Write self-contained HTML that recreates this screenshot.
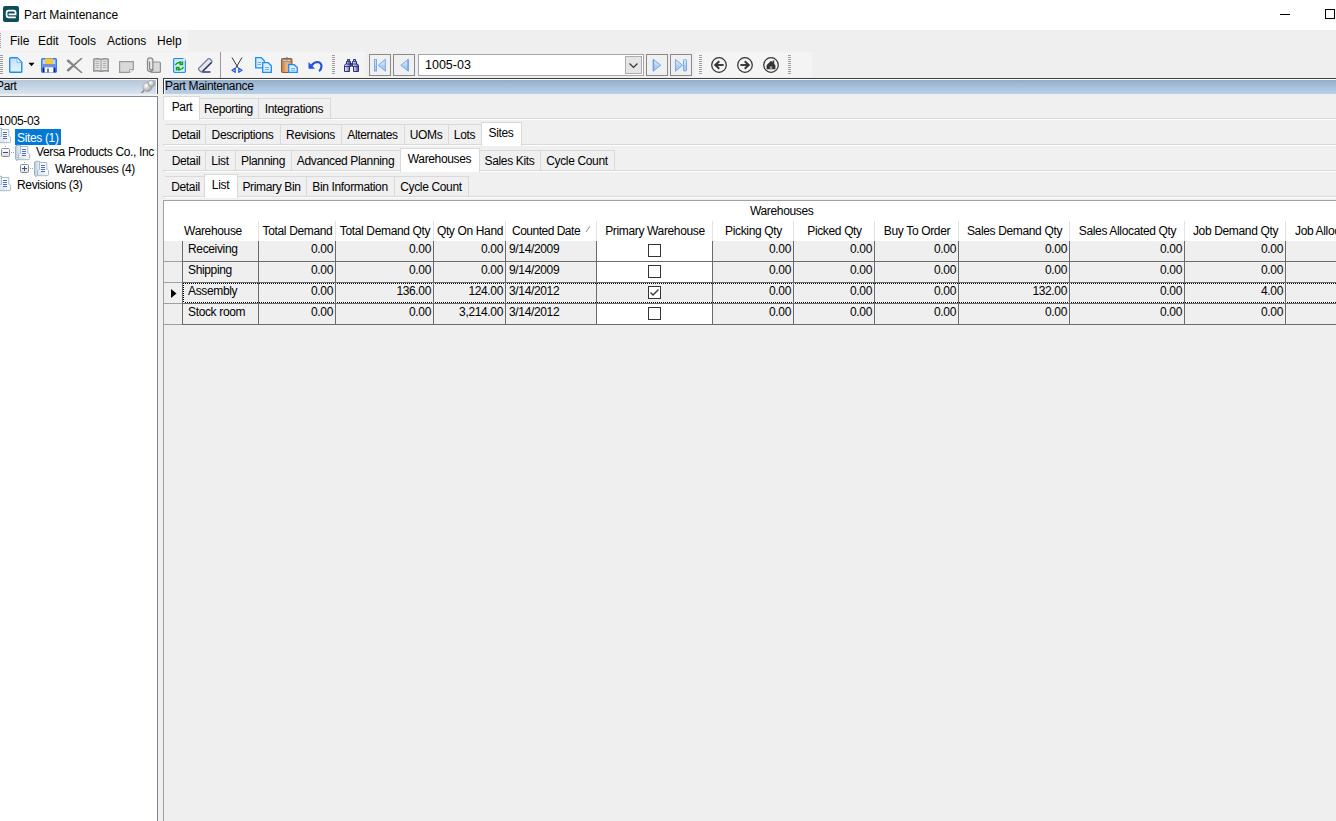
<!DOCTYPE html>
<html><head><meta charset="utf-8"><style>
*{margin:0;padding:0;box-sizing:border-box}
html,body{width:1336px;height:821px;overflow:hidden}
body{position:relative;background:#f0f0f0;font-family:"Liberation Sans",sans-serif;font-size:12px;letter-spacing:-0.35px;color:#000}
div,svg{position:absolute}
.t{white-space:pre;line-height:13px}
.m{font-size:12px;line-height:14px;letter-spacing:0}
.strip{background:#f4f4f4}
.grip{width:3px;background:repeating-linear-gradient(to bottom,#a0a0a0 0 1px,transparent 1px 2px)}
.tab{background:#f0f0f0;border:1px solid #d9d9d9;border-right:none;text-align:center}
.tabsel{background:#fff;border:1px solid #d9d9d9;border-bottom:none;text-align:center}
.nb{width:22px;height:22px;border:1px solid #8a8a8a;background:#f0f0f0}
</style></head><body>
<div style="left:0;top:0;width:1336px;height:30px;background:#fff"></div>
<svg style="left:3px;top:6px" width="16" height="16" viewBox="0 0 16 16"><rect x="0" y="0" width="16" height="16" rx="2" fill="#0d4e5c"/><path d="M12.8 11.3H5.6Q3.6 11.3 3.6 9.3V6.6Q3.6 4.6 5.6 4.6H10.8Q12.6 4.6 12.6 6.4V8.3H5.6" fill="none" stroke="#fff" stroke-width="1.7"/></svg>
<div class="t m" style="left:24px;top:8px">Part Maintenance</div>
<div style="left:1280px;top:14px;width:10px;height:1px;background:#000"></div>
<div style="left:1325px;top:9px;width:10px;height:10px;border:1px solid #000"></div>
<div style="left:0;top:30px;width:1336px;height:48px;background:#efefef"></div>
<div class="strip" style="left:0;top:30px;width:188px;height:21px"></div>
<div class="grip" style="left:0;top:33px;height:15px;width:1px"></div>
<div class="t m" style="left:10px;top:34px">File</div>
<div class="t m" style="left:38px;top:34px">Edit</div>
<div class="t m" style="left:68px;top:34px">Tools</div>
<div class="t m" style="left:107px;top:34px">Actions</div>
<div class="t m" style="left:157px;top:34px">Help</div>
<div class="strip" style="left:0;top:52px;width:365px;height:25px"></div>
<div class="strip" style="left:695px;top:52px;width:117px;height:25px"></div>
<div class="grip" style="left:0px;top:55px;height:19px"></div>
<div class="grip" style="left:332px;top:55px;height:19px"></div>
<div class="grip" style="left:699px;top:55px;height:19px"></div>
<div class="grip" style="left:788px;top:55px;height:19px"></div>
<div style="left:220px;top:52px;width:1px;height:26px;background:#9a9a9a"></div>
<svg style="left:9px;top:57px" width="14" height="16" viewBox="0 0 14 16"><defs><linearGradient id="ng" x1="0" y1="0" x2="0" y2="1"><stop offset="0" stop-color="#c4e2fb"/><stop offset="1" stop-color="#e6f3fd"/></linearGradient></defs><path d="M0.7 1.5Q0.7 0.7 1.5 0.7H8.2L12.8 5.3V14.5Q12.8 15.3 12 15.3H1.5Q0.7 15.3 0.7 14.5Z" fill="url(#ng)" stroke="#1e8cf8" stroke-width="1.4"/><path d="M8 1.2V5.5H12.3Z" fill="#fff" stroke="#6fb3f5" stroke-width="0.9"/></svg>
<svg style="left:28px;top:62px" width="7" height="5" viewBox="0 0 7 5"><path d="M0.5 0.8H6.5L3.5 4.3Z" fill="#000"/></svg>
<svg style="left:41px;top:58px" width="16" height="15" viewBox="0 0 16 15"><rect x="0.75" y="0.75" width="14.5" height="13.5" rx="1" fill="#b8d4f6" stroke="#2f7ef0" stroke-width="1.5"/><rect x="4" y="0.5" width="8" height="5.5" fill="#f7c92c"/><rect x="1.5" y="6" width="13" height="3.5" fill="#6f8fe0"/><rect x="3.5" y="9.5" width="9" height="5" fill="#fff"/><rect x="6.3" y="10.5" width="1.4" height="4" fill="#444"/><rect x="1.5" y="9.5" width="2" height="4.5" fill="#1a1aa0"/><rect x="12.5" y="9.5" width="2" height="4.5" fill="#1a1aa0"/></svg>
<svg style="left:66px;top:58px" width="17" height="15" viewBox="0 0 17 15"><path d="M1.2 3.2Q0.8 1.2 2.8 1.4L16 14.4L15.6 14.8L1.8 4.2Z" fill="#858585"/><path d="M1.2 11.8Q0.8 13.8 2.8 13.6L16 0.6L15.6 0.2L1.8 10.8Z" fill="#858585"/><path d="M1.5 2.5L15.5 14.5M1.5 12.5L15.5 0.5" stroke="#858585" stroke-width="1.6" stroke-linecap="round"/></svg>
<svg style="left:93px;top:58px" width="16" height="14" viewBox="0 0 16 14"><path d="M0.8 1.2Q4.5 0.2 8 1.4Q11.5 0.2 15.2 1.2V13.2Q11.5 12.2 8 13.4Q4.5 12.2 0.8 13.2Z" fill="#e2e2e2" stroke="#8c8c8c" stroke-width="1.3"/><path d="M8 1.5V13" stroke="#9a9a9a" stroke-width="1"/><path d="M2.5 3.5H6M2.5 5.5H6M2.5 7.5H6M2.5 9.5H6M10 3.5H13.5M10 5.5H13.5M10 7.5H13.5M10 9.5H13.5" stroke="#9c9c9c" stroke-width="0.7"/></svg>
<svg style="left:119px;top:61px" width="15" height="12" viewBox="0 0 15 12"><path d="M0.6 0.6H14.4V8.5L10.5 11.4H0.6Z" fill="#d9d9d9" stroke="#9a9a9a" stroke-width="1.2"/><path d="M10.5 11.4V8.5H14.4" fill="#fff" stroke="#9a9a9a" stroke-width="0.9"/></svg>
<svg style="left:146px;top:57px" width="15" height="16" viewBox="0 0 15 16"><rect x="5" y="5" width="9.4" height="10.4" rx="1" fill="#dadada" stroke="#909090" stroke-width="1.2"/><path d="M1.5 12V3.5Q1.5 0.8 4.2 0.8Q6.9 0.8 6.9 3.5V11Q6.9 12.8 5.2 12.8Q3.5 12.8 3.5 11V4.5" fill="#e8e8e8" stroke="#8c8c8c" stroke-width="1.3"/><path d="M1.5 12Q1.5 14.5 4.2 14.5Q7 14.5 7 12" fill="none" stroke="#8c8c8c" stroke-width="1.3"/></svg>
<svg style="left:172px;top:57px" width="15" height="17" viewBox="0 0 15 17"><path d="M1.7 2.5Q1.7 1.7 2.5 1.7H11.5L13.3 3.5V14.5Q13.3 15.3 12.5 15.3H2.5Q1.7 15.3 1.7 14.5Z" fill="#fff" stroke="#1e8cf8" stroke-width="1.3"/><rect x="3" y="3" width="9" height="11" fill="#cfe8fb"/><circle cx="12" cy="3" r="1.4" fill="#fff" stroke="#8cc4f4" stroke-width="0.6"/><path d="M3.3 8Q4.5 5.8 7 5.5H9.5M8.2 4.2V7.5H10.5V4.5M11.5 10Q10.5 12.2 8 12.5H5.5M6.8 13.8V10.5H4.5V13.5" fill="none" stroke="#10a010" stroke-width="1.4"/></svg>
<svg style="left:197px;top:58px" width="17" height="15" viewBox="0 0 17 15"><defs><linearGradient id="eg" x1="0" y1="0" x2="1" y2="1"><stop offset="0" stop-color="#ffffff"/><stop offset="1" stop-color="#c8cfdc"/></linearGradient></defs><path d="M5 14H13.5" stroke="#1a1a50" stroke-width="1.3"/><path d="M2 10Q1 11 2 12L3.5 13.5Q4.5 14.3 5.5 13.5L14.5 4.5Q15.5 3.5 14.5 2.5L13 1Q12 0 11 1Z" fill="url(#eg)" stroke="#6a7896" stroke-width="1.1"/><path d="M5.5 13.5L14.5 4.5" stroke="#2a2e5e" stroke-width="1.2"/></svg>
<svg style="left:231px;top:57px" width="12" height="16" viewBox="0 0 12 16"><path d="M1 0.5L7.5 11.5M11 0.5L4.5 11.5" stroke="#222" stroke-width="0.9"/><path d="M4.2 11.3L1 13.3L4.2 15.3Z M7.8 11.3L11 13.3L7.8 15.3Z" fill="#fff" stroke="#2455e0" stroke-width="1.3" stroke-linejoin="round"/></svg>
<svg style="left:255px;top:57px" width="17" height="16" viewBox="0 0 17 16"><path d="M0.7 0.7H6.3L9.3 3.7V10.8H0.7Z" fill="#dceefc" stroke="#1e8cf8" stroke-width="1.3"/><path d="M7.7 5.7H13.2L16.3 8.7V15.3H7.7Z" fill="#dceefc" stroke="#1e8cf8" stroke-width="1.3"/><path d="M10 10.5H14M10 12.5H14M2.5 5.5H6M2.5 7.5H6" stroke="#5a9ee8" stroke-width="0.8"/></svg>
<svg style="left:281px;top:57px" width="17" height="16" viewBox="0 0 17 16"><defs><linearGradient id="cb" x1="0" x2="1"><stop offset="0" stop-color="#c07a40"/><stop offset="0.5" stop-color="#e8b888"/><stop offset="1" stop-color="#c98a50"/></linearGradient></defs><rect x="0.5" y="1.5" width="10.5" height="14" rx="0.8" fill="url(#cb)" stroke="#9a5a2a" stroke-width="1"/><rect x="1.8" y="2.5" width="8" height="2" fill="#d4d4d4" stroke="#808080" stroke-width="0.7"/><circle cx="5.8" cy="1.8" r="1.3" fill="none" stroke="#808080" stroke-width="0.9"/><path d="M7.7 7.7H13.2L16.3 10.5V15.3H7.7Z" fill="#dceefc" stroke="#1e8cf8" stroke-width="1.3"/><path d="M10 11.5H14M10 13.3H14" stroke="#5a9ee8" stroke-width="0.8"/></svg>
<svg style="left:308px;top:60px" width="15" height="12" viewBox="0 0 15 12"><path d="M3.5 5.5Q6 2 9.5 2Q13.5 2.5 13.5 6.5Q13.3 9.5 11 11" fill="none" stroke="#2452d6" stroke-width="2.2"/><path d="M0.5 2V8.8H7Z" fill="#2452d6"/></svg>
<svg style="left:342px;top:57px" width="20" height="17" viewBox="0 0 20 17"><defs><linearGradient id="bg1" x1="0" x2="1"><stop offset="0" stop-color="#eef0fb"/><stop offset="0.5" stop-color="#a8acd8"/><stop offset="1" stop-color="#3a3f8a"/></linearGradient></defs><path d="M5.5 2.5H7.5V4.5H8.5V9.5H7.5V14.5H2.5V8.5L3.5 7H4.5V4.5H5.5Z" fill="url(#bg1)" stroke="#2b2f7c" stroke-width="1"/><path d="M13.5 2.5H11.5V4.5H10.5V9.5H11.5V14.5H16.5V8.5L15.5 7H14.5V4.5H13.5Z" fill="url(#bg1)" stroke="#2b2f7c" stroke-width="1"/><rect x="8.5" y="6" width="2" height="3.5" fill="#3a3f8a"/><path d="M2.5 9.5H8M11 9.5H16.5M4.5 7H8.5M10.5 7H14.5M5.5 4.5H7.5M11.5 4.5H13.5" stroke="#2b2f7c" stroke-width="0.9"/></svg>
<div class="nb" style="left:369px;top:54px"></div>
<div class="nb" style="left:393px;top:54px"></div>
<div class="nb" style="left:646px;top:54px"></div>
<div class="nb" style="left:670px;top:54px"></div>
<svg style="left:369px;top:54px" width="22" height="22" viewBox="0 0 22 22"><defs><linearGradient id="ntg" x1="0" y1="0" x2="0" y2="1"><stop offset="0" stop-color="#d4e4f8"/><stop offset="0.5" stop-color="#c2daf6"/><stop offset="0.52" stop-color="#a8d4f4"/><stop offset="1" stop-color="#a9c4f0"/></linearGradient></defs><rect x="5.5" y="5.5" width="2" height="11.5" fill="url(#ntg)" stroke="#7aa8e8" stroke-width="1"/><path d="M16.3 5.3V17.2L9.3 11.25Z" fill="url(#ntg)" stroke="#7aa8e8" stroke-width="1"/></svg>
<svg style="left:393px;top:54px" width="22" height="22" viewBox="0 0 22 22"><defs><linearGradient id="ntg" x1="0" y1="0" x2="0" y2="1"><stop offset="0" stop-color="#d4e4f8"/><stop offset="0.5" stop-color="#c2daf6"/><stop offset="0.52" stop-color="#a8d4f4"/><stop offset="1" stop-color="#a9c4f0"/></linearGradient></defs><path d="M15.3 5.3V17.2L7.8 11.25Z" fill="url(#ntg)" stroke="#7aa8e8" stroke-width="1"/><path d="M15 5.5V17" stroke="#6d9de6" stroke-width="1.2"/></svg>
<svg style="left:646px;top:54px" width="22" height="22" viewBox="0 0 22 22"><defs><linearGradient id="ntg" x1="0" y1="0" x2="0" y2="1"><stop offset="0" stop-color="#d4e4f8"/><stop offset="0.5" stop-color="#c2daf6"/><stop offset="0.52" stop-color="#a8d4f4"/><stop offset="1" stop-color="#a9c4f0"/></linearGradient></defs><path d="M7.2 5.3V17.2L14.8 11.25Z" fill="url(#ntg)" stroke="#7aa8e8" stroke-width="1"/><path d="M7.5 5.5V17" stroke="#6d9de6" stroke-width="1.2"/></svg>
<svg style="left:670px;top:54px" width="22" height="22" viewBox="0 0 22 22"><defs><linearGradient id="ntg" x1="0" y1="0" x2="0" y2="1"><stop offset="0" stop-color="#d4e4f8"/><stop offset="0.5" stop-color="#c2daf6"/><stop offset="0.52" stop-color="#a8d4f4"/><stop offset="1" stop-color="#a9c4f0"/></linearGradient></defs><path d="M5.5 5.3V17.2L12.5 11.25Z" fill="url(#ntg)" stroke="#7aa8e8" stroke-width="1"/><rect x="13.5" y="5.5" width="3" height="11.5" rx="1" fill="url(#ntg)" stroke="#7aa8e8" stroke-width="1"/></svg>
<div style="left:418px;top:54px;width:226px;height:22px;background:#fff;border:1px solid #a6a6ae"></div>
<div class="t m" style="left:425px;top:58px;font-size:12.5px">1005-03</div>
<div style="left:625px;top:56px;width:17px;height:18px;background:#e5e5e5;border:1px solid #adadad"></div>
<svg style="left:625px;top:56px" width="17" height="18" viewBox="0 0 17 18"><path d="M4.5 7.5L8.5 11.5L12.5 7.5" fill="none" stroke="#333" stroke-width="1.2"/></svg>
<svg style="left:710px;top:56px" width="18" height="18" viewBox="0 0 18 18"><circle cx="9" cy="9" r="7.3" fill="none" stroke="#333" stroke-width="1.25"/><path d="M13.6 9H6.2" stroke="#333" stroke-width="1.9"/><path d="M9.3 5.2L5.2 9L9.3 12.8" fill="none" stroke="#333" stroke-width="1.9"/></svg>
<svg style="left:736px;top:56px" width="18" height="18" viewBox="0 0 18 18"><circle cx="9" cy="9" r="7.3" fill="none" stroke="#333" stroke-width="1.25"/><path d="M4.4 9H11.8" stroke="#333" stroke-width="1.9"/><path d="M8.7 5.2L12.8 9L8.7 12.8" fill="none" stroke="#333" stroke-width="1.9"/></svg>
<svg style="left:762px;top:56px" width="18" height="18" viewBox="0 0 18 18"><circle cx="9" cy="9" r="7.3" fill="none" stroke="#333" stroke-width="1.25"/><path d="M4.6 9.2L9 4.8L10.6 6.4V4.6H12.2V8L13.4 9.2V13.2H4.6Z" fill="#333"/><rect x="7.8" y="10.3" width="2.4" height="2.9" fill="#9a9a9a"/></svg>
<div style="left:0;top:78px;width:158px;height:16px;border-top:1px solid #404040;border-right:1px solid #404040;background:#fbfcfd"></div>
<div style="left:0;top:80px;width:156px;height:14px;background:linear-gradient(#b7c7d9,#d7e4f1)"></div>
<div class="t" style="left:-4px;top:80px">Part</div>
<svg style="left:140px;top:79px" width="16" height="15" viewBox="0 0 16 15"><defs><radialGradient id="pg" cx="0.35" cy="0.35" r="0.7"><stop offset="0" stop-color="#fff"/><stop offset="1" stop-color="#9a9a9a"/></radialGradient></defs><path d="M1.5 14L4.5 11" stroke="#8a8a8a" stroke-width="1.6"/><circle cx="7.5" cy="8" r="4.6" fill="url(#pg)" stroke="#9a9a9a" stroke-width="0.6"/><circle cx="11.5" cy="4.5" r="3.3" fill="url(#pg)" stroke="#9a9a9a" stroke-width="0.6"/></svg>
<div style="left:0;top:96px;width:158px;height:725px;background:#fff;border-top:1px solid #838b98;border-right:1px solid #7d8592"></div>
<div style="left:163px;top:78px;width:1173px;height:16px;border-top:1px solid #404040;border-left:1px solid #404040;background:#fafcfe"></div>
<div style="left:165px;top:80px;width:1171px;height:14px;background:linear-gradient(#94aeca,#bad1ea)"></div>
<div class="t" style="left:165px;top:80px">Part Maintenance</div>
<div style="left:163px;top:118px;width:1173px;height:1px;background:#d9d9d9"></div>
<div style="left:164px;top:119px;width:1172px;height:1px;background:#fff"></div>
<div style="left:163px;top:119px;width:1px;height:1px;background:#d9d9d9"></div>
<div class="tab" style="left:199px;top:98px;width:59px;height:21px;"></div>
<div class="t" style="left:199px;top:103px;width:59px;text-align:center">Reporting</div>
<div class="tab" style="left:258px;top:98px;width:73px;height:21px;border-right:1px solid #d9d9d9;"></div>
<div class="t" style="left:258px;top:103px;width:72px;text-align:center">Integrations</div>
<div class="tabsel" style="left:163px;top:96px;width:37px;height:24px"></div>
<div class="t" style="left:164px;top:101px;width:36px;text-align:center">Part</div>
<div style="left:163px;top:144px;width:1173px;height:1px;background:#d9d9d9"></div>
<div style="left:164px;top:145px;width:1172px;height:1px;background:#fff"></div>
<div style="left:163px;top:145px;width:1px;height:1px;background:#d9d9d9"></div>
<div class="tab" style="left:165px;top:124px;width:40px;height:21px;border-left:none;"></div>
<div class="t" style="left:166px;top:129px;width:40px;text-align:center">Detail</div>
<div class="tab" style="left:205px;top:124px;width:75px;height:21px;"></div>
<div class="t" style="left:205px;top:129px;width:75px;text-align:center">Descriptions</div>
<div class="tab" style="left:280px;top:124px;width:61px;height:21px;"></div>
<div class="t" style="left:280px;top:129px;width:61px;text-align:center">Revisions</div>
<div class="tab" style="left:341px;top:124px;width:63px;height:21px;"></div>
<div class="t" style="left:341px;top:129px;width:63px;text-align:center">Alternates</div>
<div class="tab" style="left:404px;top:124px;width:44px;height:21px;"></div>
<div class="t" style="left:404px;top:129px;width:44px;text-align:center">UOMs</div>
<div class="tab" style="left:448px;top:124px;width:34px;height:21px;border-right:1px solid #d9d9d9;"></div>
<div class="t" style="left:448px;top:129px;width:33px;text-align:center">Lots</div>
<div class="tabsel" style="left:481px;top:122px;width:41px;height:24px"></div>
<div class="t" style="left:481px;top:127px;width:40px;text-align:center">Sites</div>
<div style="left:163px;top:170px;width:1173px;height:1px;background:#d9d9d9"></div>
<div style="left:164px;top:171px;width:1172px;height:1px;background:#fff"></div>
<div style="left:163px;top:171px;width:1px;height:1px;background:#d9d9d9"></div>
<div class="tab" style="left:165px;top:150px;width:40px;height:21px;border-left:none;"></div>
<div class="t" style="left:166px;top:155px;width:40px;text-align:center">Detail</div>
<div class="tab" style="left:205px;top:150px;width:30px;height:21px;"></div>
<div class="t" style="left:205px;top:155px;width:30px;text-align:center">List</div>
<div class="tab" style="left:235px;top:150px;width:56px;height:21px;"></div>
<div class="t" style="left:235px;top:155px;width:56px;text-align:center">Planning</div>
<div class="tab" style="left:291px;top:150px;width:110px;height:21px;border-right:1px solid #d9d9d9;"></div>
<div class="t" style="left:291px;top:155px;width:109px;text-align:center">Advanced Planning</div>
<div class="tab" style="left:479px;top:150px;width:61px;height:21px;"></div>
<div class="t" style="left:479px;top:155px;width:61px;text-align:center">Sales Kits</div>
<div class="tab" style="left:540px;top:150px;width:75px;height:21px;border-right:1px solid #d9d9d9;"></div>
<div class="t" style="left:540px;top:155px;width:74px;text-align:center">Cycle Count</div>
<div class="tabsel" style="left:400px;top:148px;width:80px;height:24px"></div>
<div class="t" style="left:400px;top:153px;width:79px;text-align:center">Warehouses</div>
<div style="left:163px;top:196px;width:1173px;height:1px;background:#d9d9d9"></div>
<div style="left:164px;top:197px;width:1172px;height:1px;background:#fff"></div>
<div style="left:163px;top:197px;width:1px;height:1px;background:#d9d9d9"></div>
<div class="tab" style="left:165px;top:176px;width:40px;height:21px;border-right:1px solid #d9d9d9;border-left:none;"></div>
<div class="t" style="left:166px;top:181px;width:39px;text-align:center">Detail</div>
<div class="tab" style="left:237px;top:176px;width:69px;height:21px;"></div>
<div class="t" style="left:237px;top:181px;width:69px;text-align:center">Primary Bin</div>
<div class="tab" style="left:306px;top:176px;width:88px;height:21px;"></div>
<div class="t" style="left:306px;top:181px;width:88px;text-align:center">Bin Information</div>
<div class="tab" style="left:394px;top:176px;width:75px;height:21px;border-right:1px solid #d9d9d9;"></div>
<div class="t" style="left:394px;top:181px;width:74px;text-align:center">Cycle Count</div>
<div class="tabsel" style="left:204px;top:174px;width:34px;height:24px"></div>
<div class="t" style="left:204px;top:179px;width:33px;text-align:center">List</div>
<div class="t" style="left:-2px;top:115px">1005-03</div>
<svg style="left:-6px;top:126px" width="18" height="18" viewBox="0 0 18 18"><defs><linearGradient id="dr" x1="0" x2="1"><stop offset="0" stop-color="#b9c9d6"/><stop offset="1" stop-color="#eef4f8"/></linearGradient><linearGradient id="dp" x1="0" y1="1" x2="1" y2="0"><stop offset="0" stop-color="#cfdce6"/><stop offset="0.6" stop-color="#fbfdfe"/><stop offset="1" stop-color="#f4f8fb"/></linearGradient></defs><path d="M2.5 4Q2.5 2.5 4.2 2.3H7.5V16.5H5.5Q4.2 16.5 4.2 17.5Q2.5 17 2.5 15.5Z" fill="url(#dr)" stroke="#9fb2c2" stroke-width="1"/><path d="M7.5 3.5H14.8V10.3H15.5Q16.6 11 16.6 12V15.2Q16.6 16.7 15 16.7H5.5V11.5Q5.5 10.5 7.5 10.5Z" fill="url(#dp)" stroke="#a9bccb" stroke-width="1"/><path d="M7 10.5V16" stroke="#e8eff5" stroke-width="1"/><path d="M9 6.5H13M9 8.5H13M9 10.5H13M9 12.5H13" stroke="#4a6fb8" stroke-width="1"/></svg>
<div style="left:15px;top:129px;width:46px;height:16px;background:#0078d7"></div>
<div class="t" style="left:17px;top:132px;color:#fff">Sites (1)</div>
<svg style="left:1px;top:148px" width="9" height="9" viewBox="0 0 9 9"><defs><linearGradient id="pm" x1="0" y1="0" x2="0" y2="1"><stop offset="0" stop-color="#fff"/><stop offset="1" stop-color="#dcdcdc"/></linearGradient></defs><rect x="0.5" y="0.5" width="8" height="8" rx="1" fill="url(#pm)" stroke="#8c8c8c" stroke-width="1"/><path d="M2 4.5H7" stroke="#2d4f9a" stroke-width="1"/></svg>
<div style="left:5px;top:146px;width:1px;height:1px;background:#a0a0a0"></div>
<div style="left:11px;top:152px;width:4px;height:1px;background:repeating-linear-gradient(to right,#a0a0a0 0 1px,transparent 1px 2px)"></div>
<svg style="left:13px;top:143px" width="18" height="18" viewBox="0 0 18 18"><defs><linearGradient id="dr" x1="0" x2="1"><stop offset="0" stop-color="#b9c9d6"/><stop offset="1" stop-color="#eef4f8"/></linearGradient><linearGradient id="dp" x1="0" y1="1" x2="1" y2="0"><stop offset="0" stop-color="#cfdce6"/><stop offset="0.6" stop-color="#fbfdfe"/><stop offset="1" stop-color="#f4f8fb"/></linearGradient></defs><path d="M2.5 4Q2.5 2.5 4.2 2.3H7.5V16.5H5.5Q4.2 16.5 4.2 17.5Q2.5 17 2.5 15.5Z" fill="url(#dr)" stroke="#9fb2c2" stroke-width="1"/><path d="M7.5 3.5H14.8V10.3H15.5Q16.6 11 16.6 12V15.2Q16.6 16.7 15 16.7H5.5V11.5Q5.5 10.5 7.5 10.5Z" fill="url(#dp)" stroke="#a9bccb" stroke-width="1"/><path d="M7 10.5V16" stroke="#e8eff5" stroke-width="1"/><path d="M9 6.5H13M9 8.5H13M9 10.5H13M9 12.5H13" stroke="#4a6fb8" stroke-width="1"/></svg>
<div class="t" style="left:36px;top:146px">Versa Products Co., Inc</div>
<svg style="left:20px;top:164px" width="9" height="9" viewBox="0 0 9 9"><defs><linearGradient id="pm" x1="0" y1="0" x2="0" y2="1"><stop offset="0" stop-color="#fff"/><stop offset="1" stop-color="#dcdcdc"/></linearGradient></defs><rect x="0.5" y="0.5" width="8" height="8" rx="1" fill="url(#pm)" stroke="#8c8c8c" stroke-width="1"/><path d="M2 4.5H7" stroke="#2d4f9a" stroke-width="1"/><path d="M4.5 2V7" stroke="#2d4f9a" stroke-width="1"/></svg>
<div style="left:24px;top:162px;width:1px;height:1px;background:#a0a0a0"></div>
<div style="left:30px;top:168px;width:4px;height:1px;background:repeating-linear-gradient(to right,#a0a0a0 0 1px,transparent 1px 2px)"></div>
<svg style="left:32px;top:159px" width="18" height="18" viewBox="0 0 18 18"><defs><linearGradient id="dr" x1="0" x2="1"><stop offset="0" stop-color="#b9c9d6"/><stop offset="1" stop-color="#eef4f8"/></linearGradient><linearGradient id="dp" x1="0" y1="1" x2="1" y2="0"><stop offset="0" stop-color="#cfdce6"/><stop offset="0.6" stop-color="#fbfdfe"/><stop offset="1" stop-color="#f4f8fb"/></linearGradient></defs><path d="M2.5 4Q2.5 2.5 4.2 2.3H7.5V16.5H5.5Q4.2 16.5 4.2 17.5Q2.5 17 2.5 15.5Z" fill="url(#dr)" stroke="#9fb2c2" stroke-width="1"/><path d="M7.5 3.5H14.8V10.3H15.5Q16.6 11 16.6 12V15.2Q16.6 16.7 15 16.7H5.5V11.5Q5.5 10.5 7.5 10.5Z" fill="url(#dp)" stroke="#a9bccb" stroke-width="1"/><path d="M7 10.5V16" stroke="#e8eff5" stroke-width="1"/><path d="M9 6.5H13M9 8.5H13M9 10.5H13M9 12.5H13" stroke="#4a6fb8" stroke-width="1"/></svg>
<div class="t" style="left:55px;top:163px">Warehouses (4)</div>
<svg style="left:-6px;top:174px" width="18" height="18" viewBox="0 0 18 18"><defs><linearGradient id="dr" x1="0" x2="1"><stop offset="0" stop-color="#b9c9d6"/><stop offset="1" stop-color="#eef4f8"/></linearGradient><linearGradient id="dp" x1="0" y1="1" x2="1" y2="0"><stop offset="0" stop-color="#cfdce6"/><stop offset="0.6" stop-color="#fbfdfe"/><stop offset="1" stop-color="#f4f8fb"/></linearGradient></defs><path d="M2.5 4Q2.5 2.5 4.2 2.3H7.5V16.5H5.5Q4.2 16.5 4.2 17.5Q2.5 17 2.5 15.5Z" fill="url(#dr)" stroke="#9fb2c2" stroke-width="1"/><path d="M7.5 3.5H14.8V10.3H15.5Q16.6 11 16.6 12V15.2Q16.6 16.7 15 16.7H5.5V11.5Q5.5 10.5 7.5 10.5Z" fill="url(#dp)" stroke="#a9bccb" stroke-width="1"/><path d="M7 10.5V16" stroke="#e8eff5" stroke-width="1"/><path d="M9 6.5H13M9 8.5H13M9 10.5H13M9 12.5H13" stroke="#4a6fb8" stroke-width="1"/></svg>
<div class="t" style="left:17px;top:179px">Revisions (3)</div>
<div style="left:163px;top:200px;width:1173px;height:621px;background:#efefef;border-top:1px solid #a0a0a0;border-left:1px solid #a0a0a0"></div>
<div style="left:164px;top:201px;width:1172px;height:40px;background:#fff"></div>
<div class="t" style="left:750px;top:205px">Warehouses</div>
<div style="left:258px;top:221px;width:1px;height:20px;background:#e3e3e3"></div>
<div style="left:335px;top:221px;width:1px;height:20px;background:#e3e3e3"></div>
<div style="left:433px;top:221px;width:1px;height:20px;background:#e3e3e3"></div>
<div style="left:505px;top:221px;width:1px;height:20px;background:#e3e3e3"></div>
<div style="left:596px;top:221px;width:1px;height:20px;background:#e3e3e3"></div>
<div style="left:712px;top:221px;width:1px;height:20px;background:#e3e3e3"></div>
<div style="left:793px;top:221px;width:1px;height:20px;background:#e3e3e3"></div>
<div style="left:874px;top:221px;width:1px;height:20px;background:#e3e3e3"></div>
<div style="left:958px;top:221px;width:1px;height:20px;background:#e3e3e3"></div>
<div style="left:1069px;top:221px;width:1px;height:20px;background:#e3e3e3"></div>
<div style="left:1184px;top:221px;width:1px;height:20px;background:#e3e3e3"></div>
<div style="left:1285px;top:221px;width:1px;height:20px;background:#e3e3e3"></div>
<div class="t" style="left:166px;top:225px;width:94px;text-align:center">Warehouse</div>
<div class="t" style="left:259px;top:225px;width:77px;text-align:center">Total Demand</div>
<div class="t" style="left:336px;top:225px;width:98px;text-align:center">Total Demand Qty</div>
<div class="t" style="left:434px;top:225px;width:72px;text-align:center">Qty On Hand</div>
<div class="t" style="left:512px;top:225px;letter-spacing:-0.5px">Counted Date</div>
<div class="t" style="left:597px;top:225px;width:116px;text-align:center">Primary Warehouse</div>
<div class="t" style="left:713px;top:225px;width:81px;text-align:center">Picking Qty</div>
<div class="t" style="left:794px;top:225px;width:81px;text-align:center">Picked Qty</div>
<div class="t" style="left:875px;top:225px;width:84px;text-align:center">Buy To Order</div>
<div class="t" style="left:959px;top:225px;width:111px;text-align:center">Sales Demand Qty</div>
<div class="t" style="left:1070px;top:225px;width:115px;text-align:center">Sales Allocated Qty</div>
<div class="t" style="left:1185px;top:225px;width:101px;text-align:center">Job Demand Qty</div>
<div class="t" style="left:1295px;top:225px">Job Allocated Qty</div>
<svg style="left:585px;top:225px" width="6" height="8" viewBox="0 0 6 8"><path d="M1 7L5 1.2" stroke="#8a8a8a" stroke-width="1"/></svg>
<div style="left:597px;top:241px;width:115px;height:20px;background:#fff"></div>
<div style="left:182px;top:261px;width:1154px;height:1px;background:#6b6b6b"></div>
<div style="left:164px;top:261px;width:18px;height:1px;background:#a0a0a0"></div>
<div class="t" style="left:188px;top:243px">Receiving</div>
<div class="t" style="left:259px;top:243px;width:74px;text-align:right">0.00</div>
<div class="t" style="left:336px;top:243px;width:95px;text-align:right">0.00</div>
<div class="t" style="left:434px;top:243px;width:69px;text-align:right">0.00</div>
<div class="t" style="left:509px;top:243px">9/14/2009</div>
<svg style="left:648px;top:244px" width="13" height="13" viewBox="0 0 13 13"><rect x="0.5" y="0.5" width="12" height="12" fill="#fff" stroke="#333" stroke-width="1"/></svg>
<div class="t" style="left:713px;top:243px;width:78px;text-align:right">0.00</div>
<div class="t" style="left:794px;top:243px;width:78px;text-align:right">0.00</div>
<div class="t" style="left:875px;top:243px;width:81px;text-align:right">0.00</div>
<div class="t" style="left:959px;top:243px;width:108px;text-align:right">0.00</div>
<div class="t" style="left:1070px;top:243px;width:112px;text-align:right">0.00</div>
<div class="t" style="left:1185px;top:243px;width:98px;text-align:right">0.00</div>
<div style="left:597px;top:262px;width:115px;height:20px;background:#fff"></div>
<div style="left:182px;top:282px;width:1154px;height:1px;background:#6b6b6b"></div>
<div style="left:164px;top:282px;width:18px;height:1px;background:#a0a0a0"></div>
<div class="t" style="left:188px;top:264px">Shipping</div>
<div class="t" style="left:259px;top:264px;width:74px;text-align:right">0.00</div>
<div class="t" style="left:336px;top:264px;width:95px;text-align:right">0.00</div>
<div class="t" style="left:434px;top:264px;width:69px;text-align:right">0.00</div>
<div class="t" style="left:509px;top:264px">9/14/2009</div>
<svg style="left:648px;top:265px" width="13" height="13" viewBox="0 0 13 13"><rect x="0.5" y="0.5" width="12" height="12" fill="#fff" stroke="#333" stroke-width="1"/></svg>
<div class="t" style="left:713px;top:264px;width:78px;text-align:right">0.00</div>
<div class="t" style="left:794px;top:264px;width:78px;text-align:right">0.00</div>
<div class="t" style="left:875px;top:264px;width:81px;text-align:right">0.00</div>
<div class="t" style="left:959px;top:264px;width:108px;text-align:right">0.00</div>
<div class="t" style="left:1070px;top:264px;width:112px;text-align:right">0.00</div>
<div class="t" style="left:1185px;top:264px;width:98px;text-align:right">0.00</div>
<div style="left:182px;top:303px;width:1154px;height:1px;background:#6b6b6b"></div>
<div style="left:164px;top:303px;width:18px;height:1px;background:#a0a0a0"></div>
<div class="t" style="left:188px;top:285px">Assembly</div>
<div class="t" style="left:259px;top:285px;width:74px;text-align:right">0.00</div>
<div class="t" style="left:336px;top:285px;width:95px;text-align:right">136.00</div>
<div class="t" style="left:434px;top:285px;width:69px;text-align:right">124.00</div>
<div class="t" style="left:509px;top:285px">3/14/2012</div>
<svg style="left:648px;top:286px" width="13" height="13" viewBox="0 0 13 13"><rect x="0.5" y="0.5" width="12" height="12" fill="#fff" stroke="#333" stroke-width="1"/><path d="M2.5 6.5L5 9L10.5 3.5" fill="none" stroke="#333" stroke-width="1.3"/></svg>
<div class="t" style="left:713px;top:285px;width:78px;text-align:right">0.00</div>
<div class="t" style="left:794px;top:285px;width:78px;text-align:right">0.00</div>
<div class="t" style="left:875px;top:285px;width:81px;text-align:right">0.00</div>
<div class="t" style="left:959px;top:285px;width:108px;text-align:right">132.00</div>
<div class="t" style="left:1070px;top:285px;width:112px;text-align:right">0.00</div>
<div class="t" style="left:1185px;top:285px;width:98px;text-align:right">4.00</div>
<div style="left:597px;top:304px;width:115px;height:20px;background:#fff"></div>
<div style="left:182px;top:324px;width:1154px;height:1px;background:#6b6b6b"></div>
<div style="left:164px;top:324px;width:18px;height:1px;background:#a0a0a0"></div>
<div class="t" style="left:188px;top:306px">Stock room</div>
<div class="t" style="left:259px;top:306px;width:74px;text-align:right">0.00</div>
<div class="t" style="left:336px;top:306px;width:95px;text-align:right">0.00</div>
<div class="t" style="left:434px;top:306px;width:69px;text-align:right">3,214.00</div>
<div class="t" style="left:509px;top:306px">3/14/2012</div>
<svg style="left:648px;top:307px" width="13" height="13" viewBox="0 0 13 13"><rect x="0.5" y="0.5" width="12" height="12" fill="#fff" stroke="#333" stroke-width="1"/></svg>
<div class="t" style="left:713px;top:306px;width:78px;text-align:right">0.00</div>
<div class="t" style="left:794px;top:306px;width:78px;text-align:right">0.00</div>
<div class="t" style="left:875px;top:306px;width:81px;text-align:right">0.00</div>
<div class="t" style="left:959px;top:306px;width:108px;text-align:right">0.00</div>
<div class="t" style="left:1070px;top:306px;width:112px;text-align:right">0.00</div>
<div class="t" style="left:1185px;top:306px;width:98px;text-align:right">0.00</div>
<div style="left:183px;top:283px;width:1153px;height:1px;background:repeating-linear-gradient(to right,#000 0 1px,#fff 1px 2px)"></div>
<div style="left:183px;top:302px;width:1153px;height:1px;background:repeating-linear-gradient(to right,#000 0 1px,#fff 1px 2px)"></div>
<div style="left:183px;top:283px;width:1px;height:20px;background:repeating-linear-gradient(to bottom,#000 0 1px,#fff 1px 2px)"></div>
<div style="left:182px;top:241px;width:1px;height:84px;background:#6b6b6b"></div>
<div style="left:258px;top:241px;width:1px;height:84px;background:#6b6b6b"></div>
<div style="left:335px;top:241px;width:1px;height:84px;background:#6b6b6b"></div>
<div style="left:433px;top:241px;width:1px;height:84px;background:#6b6b6b"></div>
<div style="left:505px;top:241px;width:1px;height:84px;background:#6b6b6b"></div>
<div style="left:596px;top:241px;width:1px;height:84px;background:#6b6b6b"></div>
<div style="left:712px;top:241px;width:1px;height:84px;background:#6b6b6b"></div>
<div style="left:793px;top:241px;width:1px;height:84px;background:#6b6b6b"></div>
<div style="left:874px;top:241px;width:1px;height:84px;background:#6b6b6b"></div>
<div style="left:958px;top:241px;width:1px;height:84px;background:#6b6b6b"></div>
<div style="left:1069px;top:241px;width:1px;height:84px;background:#6b6b6b"></div>
<div style="left:1184px;top:241px;width:1px;height:84px;background:#6b6b6b"></div>
<div style="left:1285px;top:241px;width:1px;height:84px;background:#6b6b6b"></div>
<svg style="left:171px;top:288px" width="6" height="11" viewBox="0 0 6 11"><path d="M0 1L5.5 5.5L0 10Z" fill="#000"/></svg>
</body></html>
